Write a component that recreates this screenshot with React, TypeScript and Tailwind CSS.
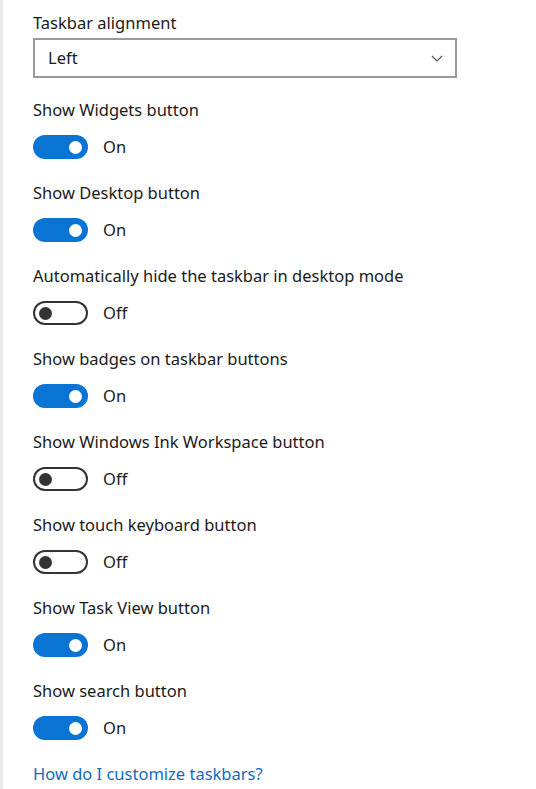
import { useState } from 'react';

interface ToggleSetting {
  id: string;
  label: string;
  on: boolean;
}

const initialSettings: ToggleSetting[] = [
  { id: 'widgets', label: 'Show Widgets button', on: true },
  { id: 'desktop', label: 'Show Desktop button', on: true },
  { id: 'autohide', label: 'Automatically hide the taskbar in desktop mode', on: false },
  { id: 'badges', label: 'Show badges on taskbar buttons', on: true },
  { id: 'ink', label: 'Show Windows Ink Workspace button', on: false },
  { id: 'keyboard', label: 'Show touch keyboard button', on: false },
  { id: 'taskview', label: 'Show Task View button', on: true },
  { id: 'search', label: 'Show search button', on: true },
];

const Toggle: React.FC<{ on: boolean; onClick: () => void }> = ({ on, onClick }) => (
  <button
    type="button"
    onClick={onClick}
    className="flex h-6 items-center gap-[15px]"
  >
    {on ? (
      <span className="flex h-6 w-[55px] items-center justify-end rounded-full bg-[#0a74d4] pr-[6px]">
        <span className="h-[13px] w-[13px] rounded-full bg-white" />
      </span>
    ) : (
      <span className="flex h-6 w-[55px] items-center rounded-full border-2 border-[#333333] bg-white pl-[4px]">
        <span className="h-[13px] w-[13px] rounded-full bg-[#333333]" />
      </span>
    )}
    <span className="text-[16.5px] leading-6 text-[#1a1a1a]">{on ? 'On' : 'Off'}</span>
  </button>
);

export default function App() {
  const [settings, setSettings] = useState(initialSettings);

  const flip = (id: string) =>
    setSettings((prev) => prev.map((s) => (s.id === id ? { ...s, on: !s.on } : s)));

  return (
    <div
      className="min-h-[789px] w-[536px] border-l-[3px] border-[#e9e9e9] bg-white pl-[30px] pt-[11px]"
      style={{ fontFamily: '"Noto Sans", "Open Sans", sans-serif' }}
    >
      {/* Alignment dropdown */}
      <div className="text-[16.5px] leading-6 text-[#1a1a1a]">Taskbar alignment</div>
      <div className="mt-[3px] flex h-10 w-[424px] items-center justify-between border-2 border-[#999999] pl-[13px] pr-[12px]">
        <span className="text-[16.5px] text-[#1a1a1a]">Left</span>
        <svg width="12" height="7" viewBox="0 0 12 7" fill="none">
          <path d="M1 1l5 5 5-5" stroke="#555" strokeWidth="1.1" />
        </svg>
      </div>

      {/* Toggles */}
      <div className="mt-5 flex flex-col gap-[22px]">
        {settings.map((s) => (
          <div key={s.id}>
            <div className="text-[16.5px] leading-6 text-[#1a1a1a]">{s.label}</div>
            <div className="mt-[13px]">
              <Toggle on={s.on} onClick={() => flip(s.id)} />
            </div>
          </div>
        ))}
      </div>

      <a href="#" className="mt-[22px] block text-[16.5px] leading-6 text-[#0f6cc4]">
        How do I customize taskbars?
      </a>
    </div>
  );
}
